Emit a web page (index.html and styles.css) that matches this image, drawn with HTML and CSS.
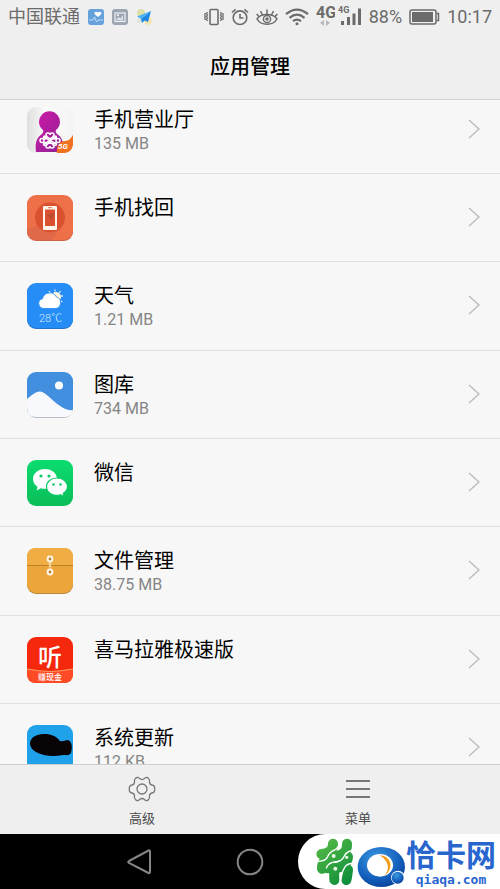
FILE: index.html
```
<!DOCTYPE html>
<html lang="zh-CN">
<head>
    <meta charset="UTF-8">
    <meta name="viewport" content="width=device-width, initial-scale=1.0">
    <title>应用管理</title>
    <link rel="stylesheet" href="styles.css">
</head>
<body>
    <div class="screen">
        <div class="status-bar">
            <div class="status-left">
                <span>中国联通</span>
                <svg width="16" height="16" viewBox="0 0 16 16"><rect width="16" height="16" rx="3" fill="#65a2dc"/><path d="M10 8 6.800 5.200C5.500 3.500 7.800 1.600 9.900 3.400 12 1.600 14.400 3.500 13.100 5.300Z" fill="#fff"/><path d="M1 11h4l1.500-3 2 5 1.500-2h5" fill="none" stroke="#d4e7f8" stroke-width=".8"/></svg>
                <svg width="16" height="16" viewBox="0 0 16 16"><rect width="16" height="16" rx="3" fill="#9aa5b0"/><rect x="3" y="4" width="10" height="8.500" fill="none" stroke="#eef1f3" stroke-width="1.200"/><path d="M4 11 6.500 8l2 1.500L11 6v5.500Z" fill="#dce1e5"/><circle cx="6" cy="6.200" r="1" fill="#fff"/></svg>
                <svg width="16" height="16" viewBox="0 0 16 16"><circle cx="5" cy="4" r="4" fill="#d9dfa5"/><circle cx="12" cy="12" r="3.800" fill="#f5e4ad"/><circle cx="3" cy="12" r="2.500" fill="#e3e6dc"/><path d="M15 2 1 7.500 5 10Z" fill="#49b2f5"/><path d="M15 2 5 10l1 4 2.500-2.500L12 13Z" fill="#1d88e2"/></svg>
            </div>
            <div class="status-right">
                <svg width="20" height="18" viewBox="0 0 20 18" fill="none" stroke="#6b6b6b"><rect x="6" y="1.500" width="8" height="15" rx="1" stroke-width="1.600"/><path d="M3.500 4 2.500 5.500l1 1.500-1 1.500 1 1.500-1 1.500 1 1.500M1 5v7M16.500 4l1 1.500-1 1.500 1 1.500-1 1.500 1 1.500-1 1.500M19 5v7" stroke-width="1.300"/></svg>
                <svg width="18" height="18" viewBox="0 0 18 18" fill="none" stroke="#6b6b6b" stroke-width="1.600"><circle cx="9" cy="9.700" r="6.800"/><path d="M9 6v4h3.500M1 4.500 4.500 1.300M13.500 1.300 17 4.500"/></svg>
                <svg width="22" height="18" viewBox="0 0 22 18" fill="none" stroke="#6b6b6b" stroke-width="1.500"><path d="M1 11C5 5 17 5 21 11 17 18 5 18 1 11Z"/><circle cx="11" cy="11" r="3.600"/><circle cx="11" cy="11" r="1" fill="#6b6b6b"/><path d="M11 6V1.500M6.500 7 4.500 3M15.500 7l2-4M2.800 8.500.7 6M19.200 8.500l2.100-2.500"/></svg>
                <svg width="24" height="18" viewBox="0 0 24 18" fill="none" stroke="#6b6b6b" stroke-width="2.200"><path d="M1 6.200Q12-3 23 6.200M4.500 9.800Q12 3.500 19.500 9.800M8 13.200q4-3.200 8 0"/><circle cx="12" cy="15.800" r="1.500" fill="#6b6b6b" stroke="none"/></svg>
                <div class="signal">
                    <svg width="19" height="24" viewBox="0 0 19 24"><text x="0" y="13" class="net-big">4G</text><path d="M8 15v6L4 18ZM10 15v6l4-3Z" fill="#b8b8b8"/></svg>
                    <svg width="24" height="24" viewBox="0 0 24 24"><text x="0" y="8" class="net-small">4G</text><path d="M3 16h3v4H3ZM9 12h3v8H9ZM14.500 8.500h3V20h-3ZM20 3.500h3V20h-3Z" fill="#6b6b6b"/></svg>
                </div>
                <span>88%</span>
                <svg width="31" height="16" viewBox="0 0 31 16"><rect x="1" y="1" width="26" height="14" rx="2" fill="none" stroke="#6b6b6b" stroke-width="1.500"/><rect x="3" y="3" width="21" height="10" fill="#6b6b6b"/><path d="M27.500 4.500h2v7h-2" fill="none" stroke="#6b6b6b" stroke-width="1.500"/></svg>
                <span>10:17</span>
            </div>
        </div>

        <header class="header">
            <h1>应用管理</h1>
        </header>

        <main class="content">
            <ul class="app-list">
                <li>
                    <a class="app" href="#">
                        <svg class="app-icon" viewBox="0 0 46 46">
                            <defs>
                                <linearGradient id="hall" x1="0" y1="0" x2="1" y2="0"><stop offset="0" stop-color="#dedede"/><stop offset=".4" stop-color="#fafafa"/><stop offset="1" stop-color="#f4f4f4"/></linearGradient>
                                <linearGradient id="person" x1="0" y1="0" x2="1" y2="1"><stop offset="0" stop-color="#ce18a6"/><stop offset="1" stop-color="#8d2394"/></linearGradient>
                            </defs>
                            <rect width="46" height="46" rx="9" fill="url(#hall)"/>
                            <path d="M9 45c-1-8 0-14 6-18q2-2 1-4a10.500 10.500 0 1 1 13 0q-1 2 1 4c6 4 7 10 6 18Z" fill="url(#person)"/>
                            <g fill="none" stroke="#fff" stroke-width="1.500"><path d="M23 32c-5-3-5-6-2-6 2 0 2 2 2 2s0-2 2-2c3 0 3 3-2 6Z"/><circle cx="15" cy="33.500" r="2"/><circle cx="31" cy="33.500" r="2"/><path d="M17 30l12 7M29 30l-12 7"/><circle cx="18" cy="30.500" r="1.500"/><circle cx="28" cy="30.500" r="1.500"/><circle cx="18" cy="37" r="1.500"/><circle cx="28" cy="37" r="1.500"/><path d="M23 35c-5 3-5 6-2 6 2 0 2-2 2-2s0 2 2 2c3 0 3-3-2-6Z"/></g>
                            <path d="M30 46c-1-8 3-12 8-12 4 0 6-3 8-6v9c0 5-4 9-9 9Z" fill="#f07120"/>
                            <text x="31" y="42" class="tag-5g">5G</text>
                        </svg>
                        <div class="app-info"><h2>手机营业厅</h2><p>135 MB</p></div>
                        <svg class="arrow" viewBox="0 0 12 20"><path d="M1 1l10 9-10 9"/></svg>
                    </a>
                </li>
                <li>
                    <a class="app" href="#">
                        <svg class="app-icon" viewBox="0 0 46 46">
                            <rect y="1" width="46" height="45" rx="9" fill="#c9664a"/>
                            <rect width="46" height="45" rx="9" fill="#ee7048"/>
                            <path d="M37 28 25 45H9Q1 44 0 37V34L12 30Z" fill="#e0694a"/>
                            <circle cx="23" cy="22.500" r="15" fill="#d9512f"/>
                            <path fill-rule="evenodd" d="M16 12q0-1 1-1h12q1 0 1 1v22q0 1-1 1H17q-1 0-1-1ZM18 14.500v16.500h10V14.500Z" fill="#fff4ea"/>
                            <path d="M21 12.700h4" stroke="#d9512f" stroke-width=".8"/>
                            <path d="m20 20 7-2-2 7Z" fill="#b94d31"/>
                        </svg>
                        <div class="app-info"><h2>手机找回</h2></div>
                        <svg class="arrow" viewBox="0 0 12 20"><path d="M1 1l10 9-10 9"/></svg>
                    </a>
                </li>
                <li>
                    <a class="app" href="#">
                        <svg class="app-icon" viewBox="0 0 46 46">
                            <rect y="1" width="46" height="45" rx="9" fill="#2873c6"/>
                            <rect width="46" height="45" rx="9" fill="#258df5"/>
                            <circle cx="29" cy="14" r="5" fill="#fff4dc"/>
                            <path d="M28 6.500v2M22 8l1.200 1.800M33.500 8l-1.200 1.800M36 13h-2M35.500 19l-1.800-1" stroke="#d7e8f5" stroke-width="1.300"/>
                            <path d="M16 25.500a5 5 0 0 1-.5-9.800 7.500 7.500 0 0 1 14-1.700 6 6 0 0 1-.5 11.500Z" fill="#fff" stroke="#258df5" stroke-width=".8"/>
                            <text x="12" y="39" class="degree">28℃</text>
                        </svg>
                        <div class="app-info"><h2>天气</h2><p>1.21 MB</p></div>
                        <svg class="arrow" viewBox="0 0 12 20"><path d="M1 1l10 9-10 9"/></svg>
                    </a>
                </li>
                <li>
                    <a class="app" href="#">
                        <svg class="app-icon" viewBox="0 0 46 46">
                            <rect y="1" width="46" height="45" rx="9" fill="#b9bcc0"/>
                            <rect width="46" height="45" rx="9" fill="#438fdf"/>
                            <circle cx="32" cy="13.500" r="4" fill="#fff"/>
                            <path d="M0 27C5 23 8 20 13 19.500 20 20 29 34 40 37.500q3 1 6 .5c-1 5-4 7-9 7H9q-9 0-9-9Z" fill="#f8f9fc"/>
                        </svg>
                        <div class="app-info"><h2>图库</h2><p>734 MB</p></div>
                        <svg class="arrow" viewBox="0 0 12 20"><path d="M1 1l10 9-10 9"/></svg>
                    </a>
                </li>
                <li>
                    <a class="app" href="#">
                        <svg class="app-icon" viewBox="0 0 46 46">
                            <defs><linearGradient id="green" x1="0" y1="0" x2="0" y2="1"><stop offset="0" stop-color="#0bdc70"/><stop offset="1" stop-color="#0abd58"/></linearGradient></defs>
                            <rect width="46" height="46" rx="9" fill="url(#green)"/>
                            <path d="M18 9C11 9 6 13.500 6 19c0 3.300 1.800 6 4.600 7.800L9.700 30.500l4.100-2.300c7.200 2.200 16.200-1.300 16.200-9.200C30 13.500 25 9 18 9Z" fill="#fff"/>
                            <path d="M30 18c-6 0-10.500 3.900-10.500 8.800 0 6.400 7.500 10 14 7.900l3.500 2-.8-3.300c2.700-1.700 4.300-4 4.300-6.600C40.500 21.900 36 18 30 18Z" fill="#fff" stroke="#0ac866" stroke-width="1.200"/>
                            <g fill="#0bc968"><circle cx="14" cy="16" r="1.600"/><circle cx="22" cy="16" r="1.600"/><circle cx="26.500" cy="24.500" r="1.300"/><circle cx="33.500" cy="24.500" r="1.300"/></g>
                        </svg>
                        <div class="app-info"><h2>微信</h2></div>
                        <svg class="arrow" viewBox="0 0 12 20"><path d="M1 1l10 9-10 9"/></svg>
                    </a>
                </li>
                <li>
                    <a class="app" href="#">
                        <svg class="app-icon" viewBox="0 0 46 46">
                            <rect y="1" width="46" height="45" rx="9" fill="#bd883a"/>
                            <rect width="46" height="45" rx="9" fill="#eca53a"/>
                            <path d="M0 17V9q0-9 9-9h28q9 0 9 9v8Z" fill="#f0ad43"/>
                            <path d="M0 17.500h46" stroke="#bc8027"/>
                            <path d="M23 11v13M21.500 15l3 4M24.500 15l-3 4" stroke="#f7dca6" stroke-width="1"/>
                            <g fill="#b78439" stroke="#fff6e8" stroke-width="2"><circle cx="23" cy="11" r="2.400"/><circle cx="23" cy="24" r="2.400"/></g>
                        </svg>
                        <div class="app-info"><h2>文件管理</h2><p>38.75 MB</p></div>
                        <svg class="arrow" viewBox="0 0 12 20"><path d="M1 1l10 9-10 9"/></svg>
                    </a>
                </li>
                <li>
                    <a class="app" href="#">
                        <svg class="app-icon" viewBox="0 0 46 46">
                            <rect width="46" height="46" rx="9" fill="#f5270c"/>
                            <path d="M0 32q23 5 46 0v5q0 9-9 9H9q-9 0-9-9Z" fill="#ff4b25"/>
                            <path d="M0 32q23 5 46 0" fill="none" stroke="#ffa067" stroke-width="1.200"/>
                            <text x="11" y="29" class="listen">听</text>
                            <text x="11" y="43" class="cash">赚现金</text>
                        </svg>
                        <div class="app-info"><h2>喜马拉雅极速版</h2></div>
                        <svg class="arrow" viewBox="0 0 12 20"><path d="M1 1l10 9-10 9"/></svg>
                    </a>
                </li>
                <li>
                    <a class="app" href="#">
                        <svg class="app-icon" viewBox="0 0 46 46">
                            <rect width="46" height="46" rx="9" fill="#20a2ea"/>
                            <path d="M3 18C4 11 11 9 18 9c6 0 11 2 15 7 3 1 5-1 8-1 5 2 4 9 3 13-2 3-5 2-8 2-10 2-20 1-27-3-4-2-6-5-6-9Z" fill="#080406"/>
                        </svg>
                        <div class="app-info"><h2>系统更新</h2><p>112 KB</p></div>
                        <svg class="arrow" viewBox="0 0 12 20"><path d="M1 1l10 9-10 9"/></svg>
                    </a>
                </li>
            </ul>
        </main>

        <div class="toolbar">
            <button class="tool" type="button">
                <svg width="28" height="28" viewBox="0 0 28 28" fill="none" stroke="#777" stroke-width="1.300"><path d="M7.500 3.500C9 1.500 10.500 2.500 11.500 3.500Q14 5.500 16.500 3.500C17.500 2.500 19 1.500 20.500 3.500Q22 4.500 21.500 7 21.500 9.500 24 10 27 10.500 26.700 14 27 17.500 24 18 21.500 18.500 21.500 21 22 23.500 20.500 24.500C19 26.500 17.500 25.500 16.500 24.500Q14 22.500 11.500 24.500C10.500 25.500 9 26.500 7.500 24.500Q6 23.500 6.500 21 6.500 18.500 4 18 1 17.500 1.300 14 1 10.500 4 10 6.500 9.500 6.500 7 6 4.500 7.500 3.500Z"/><circle cx="14" cy="14" r="5"/></svg>
                <span>高级</span>
            </button>
            <button class="tool" type="button">
                <svg width="28" height="28" viewBox="0 0 28 28"><path d="M2 6h24M2 14h24M2 22h24" stroke="#777" stroke-width="2"/></svg>
                <span>菜单</span>
            </button>
        </div>

        <div class="nav-bar">
            <button type="button" aria-label="返回"><svg width="26" height="28" viewBox="0 0 26 28"><path d="M3 13 22.500 2.500q1.500-.5 1.500 1v20.500q0 1.500-1.500 1L3 15q-1.500-1 0-2Z"/></svg></button>
            <button type="button" aria-label="主页"><svg width="28" height="28" viewBox="0 0 28 28"><circle cx="14" cy="14" r="12.300"/></svg></button>
            <div class="brand">
                <svg width="93" height="52" viewBox="70 230 279 156">
                    <defs>
                        <linearGradient id="leaf" gradientUnits="userSpaceOnUse" x1="80" y1="240" x2="190" y2="378"><stop offset="0" stop-color="#5cbc46"/><stop offset="1" stop-color="#058a3a"/></linearGradient>
                        <radialGradient id="ball" cx=".4" cy=".3" r=".8"><stop offset="0" stop-color="#3c9be1"/><stop offset=".6" stop-color="#1460bd"/><stop offset="1" stop-color="#063b91"/></radialGradient>
                    </defs>
                    <!-- 四叶图形 -->
                    <g fill="none" stroke="url(#leaf)" stroke-width="30" stroke-linecap="round" stroke-linejoin="round">
                        <path d="M130 253Q130 282 95 284"/>
                        <path d="M172 253Q174 288 134 290"/>
                        <path d="M175 292Q172 324 134 326Q98 326 97 328"/>
                        <path d="M134 292Q100 296 97 322"/>
                        <path d="M175 331Q172 358 170 362M134 326Q133 352 134 362"/>
                    </g>
                    <g fill="none" stroke="#fff" stroke-width="4" stroke-linecap="round">
                        <path d="M151 240Q150 263 138 270 118 278 113 294 108 306 80 307"/>
                        <path d="M193 272Q170 276 164 290 156 308 134 308 116 310 110 326"/>
                        <path d="M194 311Q172 312 165 324 154 341 151 378"/>
                        <path d="M114 378Q118 354 108 344"/>
                    </g>
                    <g fill="#e6f5df"><circle cx="132" cy="290" r="6"/><circle cx="137" cy="328" r="6"/><circle cx="171" cy="294" r="5"/></g>
                    <ellipse cx="275" cy="323" rx="71" ry="60" fill="url(#ball)"/>
                    <ellipse cx="271" cy="318" rx="39" ry="34" fill="#fff"/>
                    <path d="M270 288C306 290 314 330 284 350 302 330 298 305 270 288Z" fill="#f59a13"/>
                    <circle cx="325" cy="355" r="21" fill="#fff"/>
                    <circle cx="324" cy="355" r="18" fill="url(#ball)"/>
                </svg>
                <div class="brand-text"><strong>恰卡网</strong><span>qiaqa.com</span></div>
            </div>
        </div>
    </div>
</body>
</html>
```
FILE: styles.css
```
* {
    box-sizing: border-box;
}
body {
    margin: 0;
    font-family: Roboto, "Noto Sans CJK SC", sans-serif;
    background-color: #f7f7f7;
    color: #000;
}
h1, h2, p, ul {
    margin: 0;
    padding: 0;
}
svg {
    display: block;
    flex-shrink: 0;
}
button {
    padding: 0;
    border: none;
    background: none;
    font-family: inherit;
    cursor: pointer;
}
.screen {
    display: flex;
    flex-direction: column;
    height: 100vh;
    overflow: hidden;
}

/* 状态栏 */
.status-bar {
    display: flex;
    justify-content: space-between;
    align-items: center;
    height: 34px;
    padding: 0 8px;
    background-color: #efefef;
    color: #6b6b6b;
    font-size: 18px;
    line-height: 24px;
    white-space: nowrap;
}
.status-left {
    display: flex;
    align-items: center;
    gap: 8px;
}
.status-right {
    display: flex;
    align-items: center;
    gap: 7px;
}
.signal {
    display: flex;
    gap: 3px;
}
.net-big {
    font: bold 16px Roboto, sans-serif;
    fill: #6b6b6b;
}
.net-small {
    font: bold 9px Roboto, sans-serif;
    fill: #6b6b6b;
}

.header {
    display: flex;
    justify-content: center;
    align-items: center;
    height: 66px;
    background-color: #efefef;
    border-bottom: 1px solid #d2d2d2;
}
.header h1 {
    font-size: 20px;
    line-height: 28px;
    font-weight: 500;
}

/* 应用列表 */
.content {
    flex: 1;
    min-height: 0;
    overflow: hidden;
}
.app-list {
    list-style: none;
    margin-top: -14px;
}
.app-list li {
    height: 88px;
    border-bottom: 1px solid #dfdfdf;
}
.app-list li:nth-child(3n) {
    height: 89px;
}
.app {
    display: flex;
    align-items: flex-start;
    height: 100%;
    padding: 21px 20px 0 27px;
    color: inherit;
    text-decoration: none;
}
.app-icon {
    width: 46px;
    height: 46px;
}
.app-info {
    flex: 1;
    margin-left: 21px;
}
.app-info h2 {
    font-size: 20px;
    line-height: 26px;
    font-weight: 400;
}
.app-info p {
    font-size: 16px;
    line-height: 22px;
    color: #858585;
}
.arrow {
    width: 12px;
    height: 20px;
    margin-top: 12px;
    fill: none;
    stroke: #bdbdbd;
    stroke-width: 1.5px;
}
.tag-5g {
    font: italic bold 8px Roboto, sans-serif;
    fill: #fff;
}
.degree {
    font: 300 11px Roboto, "Noto Sans CJK SC", sans-serif;
    fill: #d3e9ff;
}
.listen {
    font: 500 24px "Noto Sans CJK SC", sans-serif;
    fill: #fff;
}
.cash {
    font: 500 8px "Noto Sans CJK SC", sans-serif;
    fill: #fff;
}

.toolbar {
    display: flex;
    height: 70px;
    padding: 0 34px;
    background-color: #efefef;
    border-top: 1px solid #cfcfcf;
}
.tool {
    flex: 1;
    display: flex;
    flex-direction: column;
    align-items: center;
    padding-top: 10px;
    gap: 7px;
    color: #4a4a4a;
    font-size: 13px;
    line-height: 18px;
}

/* 导航栏 */
.nav-bar {
    position: relative;
    display: flex;
    justify-content: center;
    align-items: center;
    gap: 84px;
    height: 55px;
    padding-right: 111px;
    background-color: #000;
}
.nav-bar button svg {
    fill: none;
    stroke: #858585;
    stroke-width: 2px;
}
.brand {
    position: absolute;
    top: 0;
    right: 0;
    bottom: 0;
    display: flex;
    align-items: center;
    width: 202px;
    padding-left: 15px;
    background-color: #fff;
    border-radius: 28px 0 0 28px;
}
.brand-text {
    display: flex;
    flex-direction: column;
    align-items: center;
    color: #2866ce;
}
.brand-text strong {
    font-size: 30px;
    line-height: 36px;
    font-weight: 700;
}
.brand-text span {
    font-family: "DejaVu Sans Mono", monospace;
    font-size: 13px;
    line-height: 12px;
    font-weight: 700;
}
```
